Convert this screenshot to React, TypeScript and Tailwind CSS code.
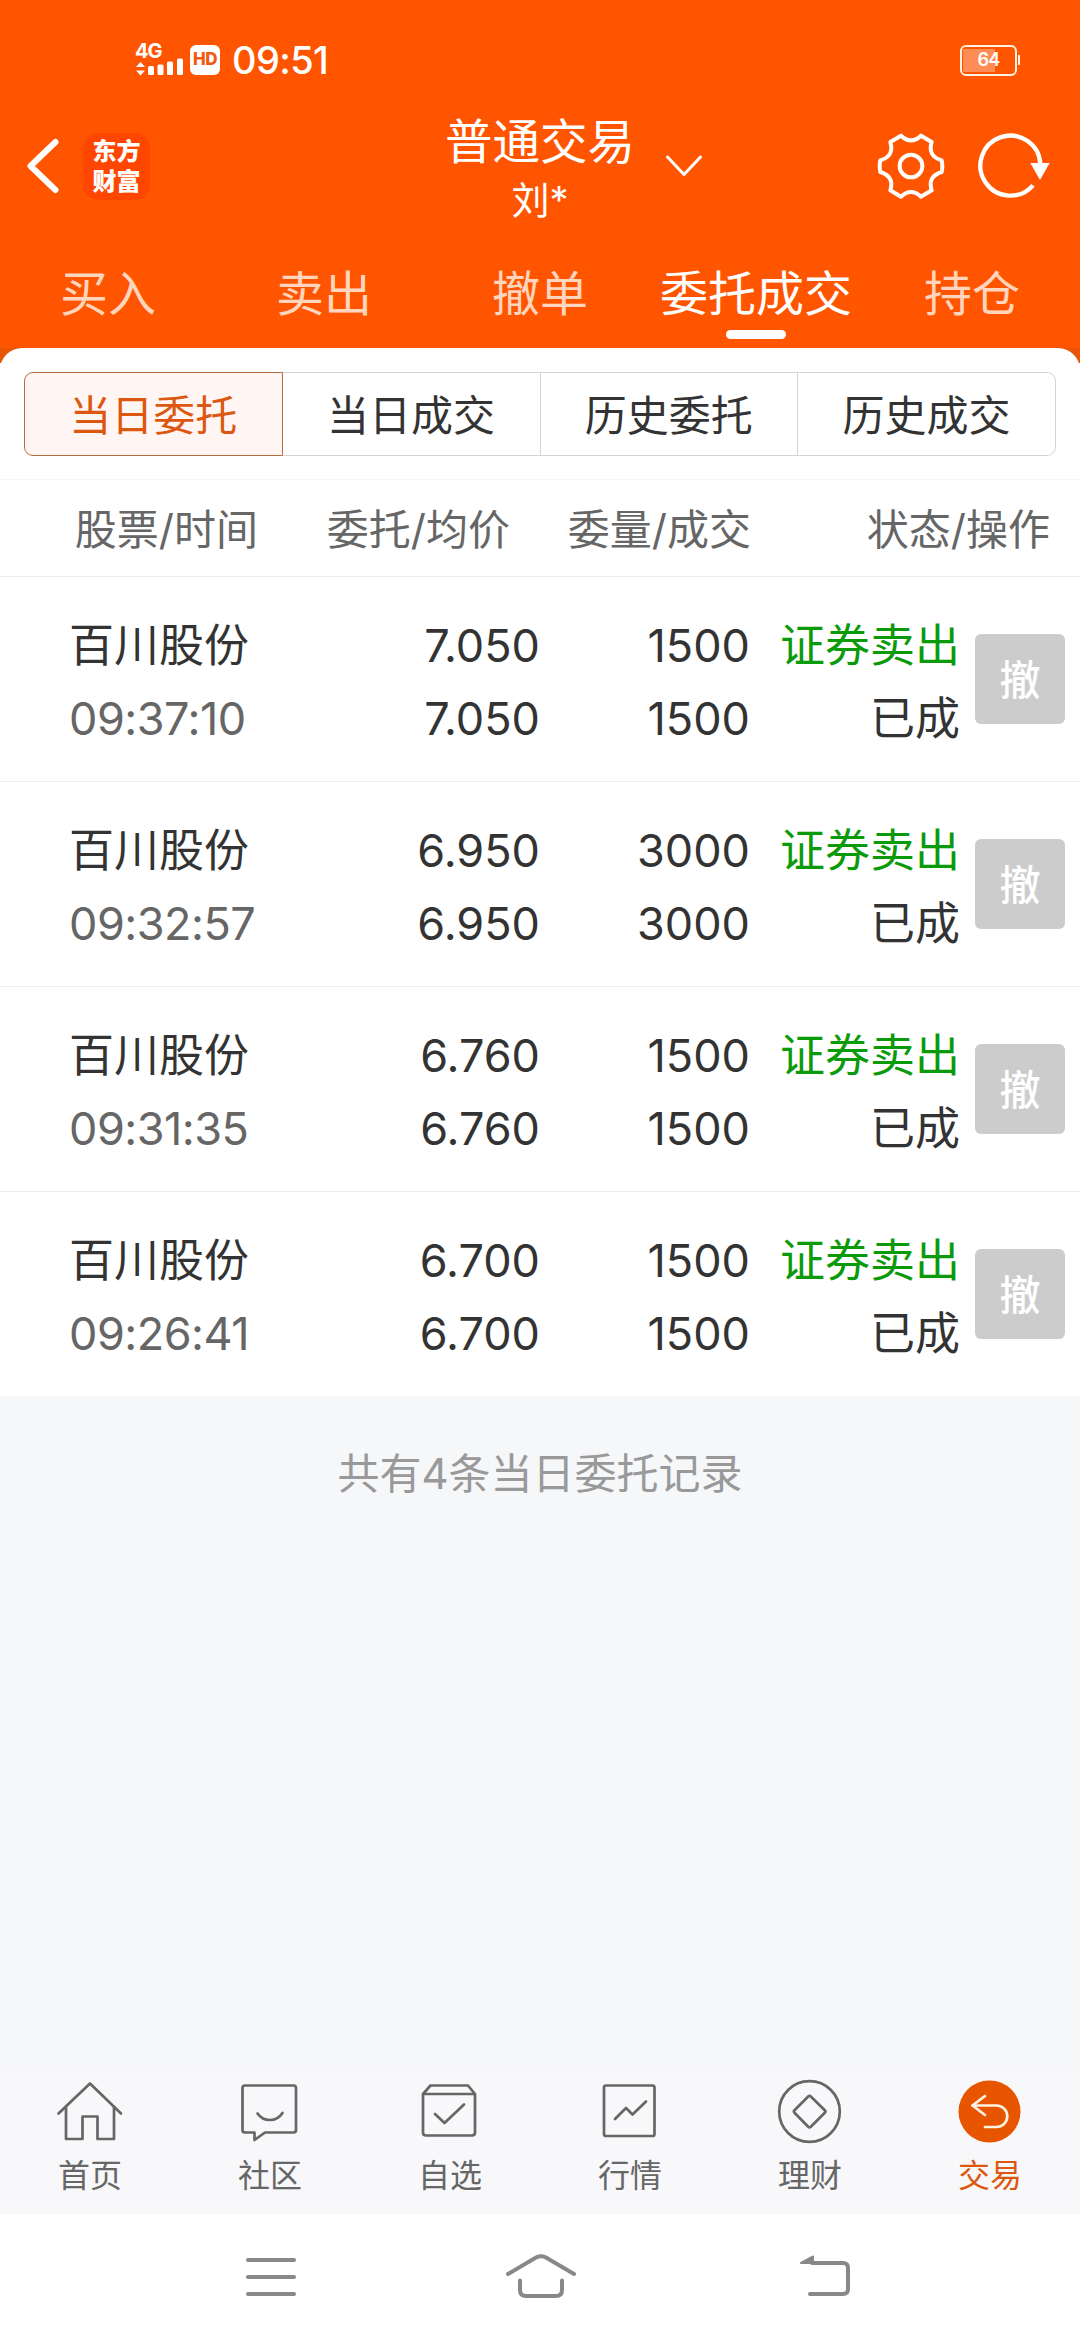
import { useState, type ReactNode } from 'react';
import clsx from 'clsx';

const tabs = ['买入', '卖出', '撤单', '委托成交', '持仓'];

const segments = ['当日委托', '当日成交', '历史委托', '历史成交'];

const orders = [
  { id: 1, name: '百川股份', time: '09:37:10', price: '7.050', avg: '7.050', amount: '1500', filled: '1500' },
  { id: 2, name: '百川股份', time: '09:32:57', price: '6.950', avg: '6.950', amount: '3000', filled: '3000' },
  { id: 3, name: '百川股份', time: '09:31:35', price: '6.760', avg: '6.760', amount: '1500', filled: '1500' },
  { id: 4, name: '百川股份', time: '09:26:41', price: '6.700', avg: '6.700', amount: '1500', filled: '1500' },
];

const navItems: { name: string; icon: ReactNode }[] = [
  {
    name: '首页',
    icon: (
      <>
        <path d="M4.5 37.5L36 7.5L67 37.5" />
        <path d="M12 31V63H28.5V40.5H43.5V63H60V31" />
      </>
    ),
  },
  {
    name: '社区',
    icon: (
      <>
        <path d="M11 9.5H59.5Q62 9.5 62 12V54Q62 56.5 59.5 56.5H31L20.5 64V56.5H11Q8.5 56.5 8.5 54V12Q8.5 9.5 11 9.5Z" />
        <path d="M23.5 37.5Q28 44 36 44T48.5 37" />
      </>
    ),
  },
  {
    name: '自选',
    icon: (
      <>
        <path d="M9 18V56.5Q9 59.5 12 59.5H58Q61 59.5 61 56.5V18L54 9.5H16.5L9 18H61" />
        <path d="M21 38L30.5 47L50 28.5" />
      </>
    ),
  },
  {
    name: '行情',
    icon: (
      <>
        <rect x="10" y="9.5" width="50.5" height="50.5" rx="2" />
        <path d="M21 43L32 32L38.5 38.5L52 25.5" />
      </>
    ),
  },
  {
    name: '理财',
    icon: (
      <>
        <circle cx="35.5" cy="35.5" r="30.3" />
        <path d="M34.2 20.5Q35.5 19.2 36.8 20.5L50.8 34.2Q52 35.5 50.8 36.8L36.8 50.8Q35.5 52 34.2 50.8L20.5 36.8Q19.3 35.5 20.5 34.2Z" />
      </>
    ),
  },
  {
    name: '交易',
    icon: (
      <>
        <circle cx="35.5" cy="35.5" r="31" fill="#e85500" stroke="none" />
        <g stroke="#fff3e6">
          <path d="M31 20L18.5 29.5L31 39" />
          <path d="M18.5 29.5H42.5A10.7 10.7 0 0 1 42.5 51H31" />
        </g>
      </>
    ),
  },
];

function StatusBar() {
  return (
    <div className="flex h-[112px] items-center pt-2 pl-[135px] text-white">
      <div className="flex h-[34px] w-[49px] flex-col justify-between">
        <span className="text-[20px] leading-[17px] font-bold tracking-[-1px]">4G</span>
        <svg width="49" height="17" viewBox="0 0 49 17" fill="currentColor" overflow="visible">
          <path d="M1 7L5.5 2L10 7ZM1 10.5L5.5 15.5L10 10.5Z" />
          <rect x="13" y="6" width="6" height="9" rx="1.5" />
          <rect x="22.5" y="4.5" width="6" height="10.5" rx="1.5" />
          <rect x="32" y="1.5" width="6" height="13.5" rx="1.5" />
          <rect x="42" y="-1.5" width="6" height="16.5" rx="1.5" />
        </svg>
      </div>
      <span className="ml-[6px] flex h-[30px] w-[30px] items-center justify-center rounded-[6px] bg-white text-[17px] font-extrabold tracking-[-0.5px] text-[#f05a10]">
        HD
      </span>
      <span className="ml-[12px] text-[38px] leading-none font-medium tracking-[-0.6px]">09:51</span>
      <div className="mr-[60px] ml-auto flex items-center">
        <div className="relative flex h-[31px] w-[57px] items-center justify-center rounded-[6px] border-[2.5px] border-[#fff0e0]">
          <div className="absolute top-[2px] bottom-[2px] left-[1px] w-[32px] bg-[#ff8c55]" />
          <span className="relative text-[18px] leading-none font-semibold tracking-[-0.8px]">64</span>
        </div>
        <div className="ml-px h-[10px] w-[2px] bg-[#fff0e0]" />
      </div>
    </div>
  );
}

function TitleBar() {
  return (
    <div className="flex h-[108px] items-center text-white">
      <div className="flex w-[445px] items-center pl-[26px]">
        <svg width="35" height="58" viewBox="0 0 35 58" fill="none" stroke="currentColor" strokeWidth="6" strokeLinecap="round" strokeLinejoin="round">
          <path d="M29.5 5L4.5 29L29.5 53" />
        </svg>
        <div className="ml-[22px] h-[67px] w-[67px] rounded-[15px] bg-[#ff4600] px-[9px] pt-[2px] text-center font-['Noto_Sans_CJK_SC',sans-serif] text-[24px] leading-[30px] font-black break-all">
          东方财富
        </div>
      </div>
      <div className="w-[190px] pt-[10px] text-center leading-[58px]">
        <h1 className="text-[47.5px] whitespace-nowrap">普通交易</h1>
        <p className="text-[38px]">刘*</p>
      </div>
      <svg className="ml-[30px]" width="38" height="24" viewBox="0 0 38 24" fill="none" stroke="currentColor" strokeWidth="3" strokeLinecap="round" strokeLinejoin="round">
        <path d="M2.5 3L19 20.5L35.5 3" />
      </svg>
      <svg className="ml-auto" width="68" height="68" viewBox="50 66 204 204" fill="none" stroke="currentColor" strokeWidth="12" strokeLinejoin="round">
        <path d="M122 77Q152 105 182 77L214 96Q201 138 244 151Q248 168 244 186Q201 199 214 241L182 260Q152 232 122 260L90 241Q103 199 60 186Q56 168 60 151Q103 138 90 96Z" />
        <circle cx="152" cy="168" r="34" />
      </svg>
      <svg className="mr-[29px] ml-[32px]" width="74" height="68" viewBox="352 66 222 204" fill="none" stroke="currentColor" strokeWidth="13">
        <path d="M520 226A90 90 0 1 1 542 162" />
        <path d="M512 159H570L541 210Z" fill="currentColor" stroke="none" />
      </svg>
    </div>
  );
}

function OrderRow({ order }: { order: (typeof orders)[number] }) {
  return (
    <div className="flex h-[205px] items-start border-t border-[#ececec] pt-8 text-[45px] leading-[73px] text-[#333]">
      <div className="w-[210px] pl-[69px] whitespace-nowrap">
        <p>{order.name}</p>
        <p className="tracking-[-0.5px] text-[#666]">{order.time}</p>
      </div>
      <div className="w-[330px] text-right">
        <p>{order.price}</p>
        <p>{order.avg}</p>
      </div>
      <div className="w-[210px] text-right">
        <p>{order.amount}</p>
        <p>{order.filled}</p>
      </div>
      <div className="w-[210px] text-right">
        <p className="text-[#0a9a0a]">证券卖出</p>
        <p>已成</p>
      </div>
      <button className="mt-[25px] ml-[15px] h-[90px] w-[90px] rounded-[6px] bg-[#ccc] pt-[3px] text-[41px] leading-[87px] font-medium text-white">
        撤
      </button>
    </div>
  );
}

export default function App() {
  const [activeTab, setActiveTab] = useState('委托成交');
  const [activeSegment, setActiveSegment] = useState('当日委托');

  return (
    <div className="flex h-[2340px] w-[1080px] flex-col overflow-hidden bg-[#f6f7f9] font-[Inter,'Noto_Sans_CJK_SC',sans-serif]">
      <header className="h-[348px] shrink-0 bg-[#ff5500]">
        <StatusBar />
        <TitleBar />
        <div className="grid grid-cols-5 pt-[44px] text-[48px] leading-[60px]">
          {tabs.map((tab) => (
            <button
              key={tab}
              onClick={() => setActiveTab(tab)}
              className={clsx('flex flex-col items-center whitespace-nowrap', activeTab === tab ? 'text-white' : 'text-[#ffd5bd]')}
            >
              {tab}
              {activeTab === tab && <span className="mt-[6px] h-[9px] w-[60px] rounded-full bg-white" />}
            </button>
          ))}
        </div>
      </header>

      <main className="bg-[linear-gradient(#e85505_15px,#fff_15px)]">
        <div className="rounded-t-[22px] bg-white">
          <div className="h-[131px] px-6 pt-6">
            <div className="flex h-[84px] text-[42px]">
              {segments.map((segment) => (
                <button
                  key={segment}
                  onClick={() => setActiveSegment(segment)}
                  className={clsx(
                    'flex-1 border border-l-0 pt-[2px] first:rounded-l-[9px] first:border-l last:rounded-r-[9px]',
                    activeSegment === segment
                      ? 'border-[#b86a40] bg-[#fff6f3] text-[#dc5810]'
                      : 'border-[#d4d4d4] text-[#333]'
                  )}
                >
                  {segment}
                </button>
              ))}
            </div>
          </div>

          <div className="flex h-[97px] items-center border-t border-[#f6f6f6] pt-[3px] text-[42px] text-[#666]">
            <span className="w-[258px] text-right">股票/时间</span>
            <span className="w-[252px] text-right">委托/均价</span>
            <span className="w-[241px] text-right">委量/成交</span>
            <span className="w-[299px] text-right">状态/操作</span>
          </div>

          {orders.map((order) => (
            <OrderRow key={order.id} order={order} />
          ))}
        </div>
      </main>

      <p className="flex-1 pt-[48px] text-center text-[42px] leading-[60px] text-[#999]">共有4条当日委托记录</p>

      <nav className="grid h-[144px] shrink-0 grid-cols-6 bg-[#f8f8fa] pt-[6px]">
        {navItems.map((item) => (
          <div key={item.name} className="flex flex-col items-center">
            <svg width="72" height="72" viewBox="0 0 72 72" fill="none" stroke="#666" strokeWidth="2.7" strokeLinejoin="round" strokeLinecap="round">
              {item.icon}
            </svg>
            <span className={clsx('mt-[8px] text-[32px] leading-[40px]', item.name === '交易' ? 'text-[#dc5810]' : 'text-[#666]')}>
              {item.name}
            </span>
          </div>
        ))}
      </nav>

      <div className="flex h-[126px] shrink-0 items-center justify-between bg-white pr-[224px] pl-[241px]">
        <svg width="60" height="48" viewBox="0 0 60 48" fill="none" stroke="#888" strokeWidth="4" strokeLinecap="round">
          <path d="M7 7H53M7 24H53M7 41H53" />
        </svg>
        <svg className="-ml-[15px]" width="76" height="48" viewBox="0 0 76 48" fill="none" stroke="#888" strokeWidth="4" strokeLinecap="round">
          <path d="M5 21L33 4.5Q38 2 43 4.5L71 21" />
          <path d="M17 27.5V37Q17 43 23 43H53Q59 43 59 37V27.5" />
        </svg>
        <svg width="60" height="48" viewBox="0 0 60 48" fill="none" stroke="#888" strokeWidth="4" strokeLinecap="round">
          <path d="M16 10H47Q52 10 52 15V36Q52 41 47 41H14" />
          <path d="M5 10L17 3.5V10Z" fill="#888" strokeWidth="2" strokeLinejoin="round" />
        </svg>
      </div>
    </div>
  );
}
